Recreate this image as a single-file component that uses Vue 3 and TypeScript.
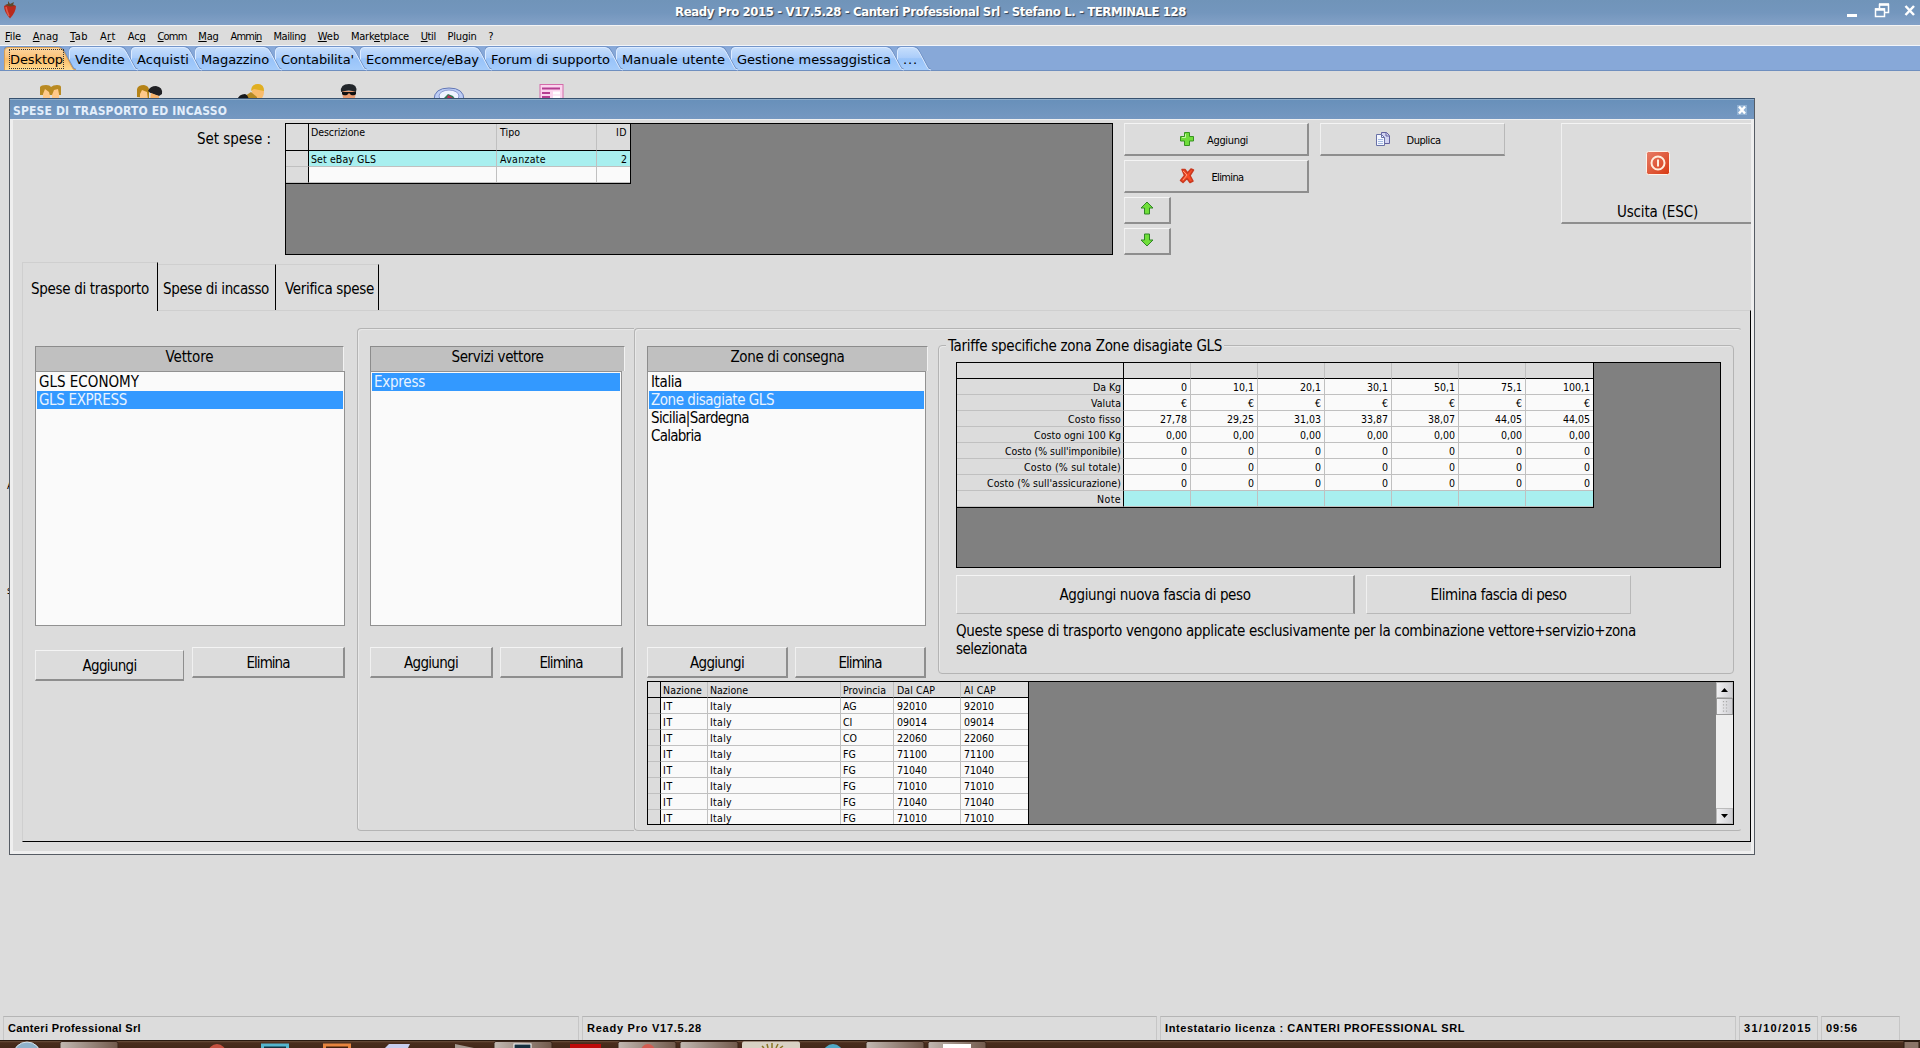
<script setup lang="ts">
interface FitText { label: string; width: number }
interface MenuItem { pre: string; key: string; post: string; width: number }

// Spreads or tightens the letters of a label so that it takes the given width.
const vFit = {
  mounted(el: HTMLElement, binding: { value: number }) {
    const length = (el.textContent ?? '').length
    if (!length || !binding.value) return
    const natural = el.getBoundingClientRect().width
    el.style.letterSpacing = `${((binding.value - natural) / length).toFixed(3)}px`
  },
}

const menu: MenuItem[] = [
  { pre: '', key: 'F', post: 'ile', width: 16 },
  { pre: '', key: 'A', post: 'nag', width: 25.500 },
  { pre: '', key: 'T', post: 'ab', width: 18 },
  { pre: 'A', key: 'r', post: 't', width: 16 },
  { pre: 'Ac', key: 'q', post: '', width: 18 },
  { pre: '', key: 'C', post: 'omm', width: 29 },
  { pre: '', key: 'M', post: 'ag', width: 20.500 },
  { pre: 'Ammi', key: 'n', post: '', width: 31 },
  { pre: 'Mailin', key: 'g', post: '', width: 32.500 },
  { pre: '', key: 'W', post: 'eb', width: 21.500 },
  { pre: 'Mark', key: 'e', post: 'tplace', width: 58 },
  { pre: '', key: 'U', post: 'til', width: 15 },
  { pre: 'Plugin', key: '', post: '', width: 29 },
  { pre: '?', key: '', post: '', width: 5 },
]

const tabs: FitText[] = [
  { label: 'Desktop', width: 53 },
  { label: 'Vendite', width: 50 },
  { label: 'Acquisti', width: 52 },
  { label: 'Magazzino', width: 68 },
  { label: "Contabilita'", width: 73 },
  { label: 'Ecommerce/eBay', width: 113 },
  { label: 'Forum di supporto', width: 119 },
  { label: 'Manuale utente', width: 103 },
  { label: 'Gestione messaggistica', width: 154 },
  { label: '...', width: 15 },
]

const tabPath = (w: number): string =>
  `M0.5 24 V5 Q0.5 1.5 4 1.5 H${w + 1} Q${w + 5} 1.5 ${w + 7} 6 L${w + 15} 21 Q${w + 16} 24 ${w + 19} 24`

const carriers: FitText[] = [{ label: 'GLS ECONOMY', width: 100 }, { label: 'GLS EXPRESS', width: 88 }]
const zones: FitText[] = [
  { label: 'Italia', width: 31 },
  { label: 'Zone disagiate GLS', width: 123 },
  { label: 'Sicilia|Sardegna', width: 98 },
  { label: 'Calabria', width: 50 },
]

const rates: { label: string; width: number; values: string[] }[] = [
  { label: 'Da Kg', width: 28, values: ['0', '10,1', '20,1', '30,1', '50,1', '75,1', '100,1'] },
  { label: 'Valuta', width: 30, values: Array(7).fill('€') },
  { label: 'Costo fisso', width: 53, values: ['27,78', '29,25', '31,03', '33,87', '38,07', '44,05', '44,05'] },
  { label: 'Costo ogni 100 Kg', width: 87, values: Array(7).fill('0,00') },
  { label: "Costo (% sull'imponibile)", width: 116, values: Array(7).fill('0') },
  { label: 'Costo (% sul totale)', width: 97, values: Array(7).fill('0') },
  { label: "Costo (% sull'assicurazione)", width: 134, values: Array(7).fill('0') },
  { label: 'Note', width: 24, values: Array(7).fill('') },
]

const areas: [string, string][] = [
  ['AG', '92010'], ['CI', '09014'], ['CO', '22060'], ['FG', '71100'],
  ['FG', '71040'], ['FG', '71010'], ['FG', '71040'], ['FG', '71010'],
]
</script>

<template>
  <div class="screen">
    <header class="titlebar">
      <svg class="berry" width="16" height="20" viewBox="0 0 16 20">
        <path d="M2 6 Q8 2 14 6 Q14 12 8 18.500 Q2 12 2 6Z" fill="#b92a1c" />
        <path d="M4 7 Q5 12 7 16" stroke="#de5a4a" stroke-width="1.500" fill="none" />
        <path d="M3 5 L6 4 L6 1 L8 4 L12 2 L11 5 L13 6 L8 6.500 Z" fill="#5d4a2c" />
      </svg>
      <h1><span v-fit="511">Ready Pro 2015 - V17.5.28 - Canteri Professional Srl - Stefano L. - TERMINALE 128</span></h1>
      <div class="controls">
        <svg width="22" height="22" viewBox="0 0 22 22"><rect x="5" y="14" width="10" height="3" fill="#fff" /></svg>
        <svg width="22" height="22" viewBox="0 0 22 22">
          <path d="M8.500 8V4.500H17.500V12.500H14" fill="none" stroke="#fff" stroke-width="1.500" />
          <path d="M8 4.500H18" stroke="#fff" stroke-width="2.500" />
          <rect x="4.500" y="9" width="9" height="7.500" fill="none" stroke="#fff" stroke-width="1.500" />
          <path d="M4 9.500H14" stroke="#fff" stroke-width="2.500" />
        </svg>
        <svg width="22" height="22" viewBox="0 0 22 22"><path d="M5.500 6L14 15M14 6L5.500 15" stroke="#fff" stroke-width="2.500" /></svg>
      </div>
    </header>

    <nav class="menu">
      <span v-for="m in menu" :key="m.pre + m.key + m.post" class="menu-item" :style="{ width: m.width + 'px' }"><span v-fit="m.width">{{ m.pre }}<u>{{ m.key }}</u>{{ m.post }}</span></span>
    </nav>

    <nav class="tabs">
      <div v-for="(t, i) in tabs" :key="t.label" class="tab" :class="{ active: i === 0 }" :style="{ width: t.width + 12 + 'px', zIndex: 20 - i }">
        <svg class="tab-shape" :width="t.width + 20" height="25" :viewBox="`0 0 ${t.width + 20} 25`">
          <defs>
            <linearGradient :id="'tab' + i" x1="0" y1="0" x2="0" y2="1">
              <stop offset="0" :stop-color="i ? '#c6defc' : '#fbd5a0'" />
              <stop offset=".45" :stop-color="i ? '#abcdfa' : '#fbc37a'" />
              <stop offset=".5" :stop-color="i ? '#98c3f9' : '#fbbd68'" />
              <stop offset="1" :stop-color="i ? '#a5ccfb' : '#ffdc92'" />
            </linearGradient>
          </defs>
          <path :d="tabPath(t.width)" fill="none" stroke="#6d8fc4" stroke-width="2.500" />
          <path :d="tabPath(t.width)" :fill="`url(#tab${i})`" :stroke="i ? '#dcebff' : '#d8a055'" />
        </svg>
        <span v-fit="t.width" class="tab-text">{{ t.label }}</span>
      </div>
    </nav>

    <main class="desktop">
      <div class="shortcuts">
        <svg width="24" height="16" viewBox="0 0 24 16">
          <path d="M1 11V3Q2 1 7 1Q11 1 12 3Q14 1 18 1Q22 1 22 3V11Z" fill="#b98a22" />
          <path d="M4 16V10L6 5L10 8L11 12V16ZM13 16V11L15 6L19 5L20 10V16Z" fill="#ffc98a" />
        </svg>
        <svg width="28" height="16" viewBox="0 0 28 16">
          <path d="M1 13V5Q2 1 8 1Q13 2 13 6V14Z" fill="#b58317" /><path d="M4 16V10L6 6L11 8L12 16Z" fill="#ffc98a" />
          <path d="M12 7Q14 2 20 2Q27 3 26 10L23 12Q15 10 12 7Z" fill="#202024" /><path d="M14 16L15 9L23 12V16Z" fill="#f8b36c" />
        </svg>
        <svg width="30" height="16" viewBox="0 0 30 16">
          <ellipse cx="21" cy="8" rx="6" ry="8" fill="#f9bc6c" /><path d="M14 7Q14 0 21 0Q27 0 27 7L17 5Z" fill="#e0af22" />
          <path d="M8 12L14 8L20 13V16H7Z" fill="#b58a24" /><path d="M0 16Q2 10 8 10Q11 11 12 16Z" fill="#16181b" />
        </svg>
        <svg width="20" height="16" viewBox="0 0 20 16">
          <path d="M3 7H17L16 14Q15 16 10 16Q5 16 4 14Z" fill="#e99c72" />
          <path d="M2 8Q1 0 10 0Q19 0 17 8Q10 5 2 8Z" fill="#22262a" />
          <path d="M3 8H17V10Q16 12 12 11L10 9L8 11Q4 12 3 10Z" fill="#111" />
        </svg>
        <svg width="33" height="16" viewBox="0 0 33 16">
          <path d="M2 16Q2 4 17 4Q32 4 32 16Z" fill="#bdcdf5" stroke="#6377b5" /><ellipse cx="17" cy="12" rx="10" ry="6" fill="#eef3ff" stroke="#8a99cf" />
          <path d="M12 14L16 10L21 12L24 16H12Z" fill="#327b54" /><path d="M16 11L21 14H15Z" fill="#bb3157" />
        </svg>
        <svg width="27" height="16" viewBox="0 0 27 16">
          <rect x="2" y=".5" width="23" height="16" fill="#fbd5ee" stroke="#d46baa" />
          <path d="M4 4.500H22M4 9H12M4 13H12" stroke="#b53e91" stroke-width="2" /><path d="M15 9H22M15 13H22" stroke="#fff" stroke-width="3" />
        </svg>
      </div>
      <span class="under first">A</span>
      <span class="under second">s</span>

      <section class="window">
        <div class="window-title">
          <span v-fit="214">SPESE DI TRASPORTO ED INCASSO</span>
          <svg width="10" height="10" viewBox="0 0 10 10"><rect width="10" height="10" fill="#8fb0d3" /><path d="M2 1.500L8 8.500M8 1.500L2 8.500" stroke="#fff" stroke-width="2.400" /></svg>
        </div>
        <div class="client">
          <div class="top">
            <div class="set-label"><span v-fit="74">Set spese :</span></div>
            <div class="grid set-grid">
              <div class="table set-table">
                <div class="row head"><i class="stub" /><b class="c-desc"><span v-fit="54">Descrizione</span></b><b class="c-type"><span v-fit="20">Tipo</span></b><b class="c-id"><span v-fit="11">ID</span></b></div>
                <div class="row current"><i class="stub" /><b class="c-desc"><span v-fit="65">Set eBay GLS</span></b><b class="c-type"><span v-fit="46">Avanzate</span></b><b class="c-id">2</b></div>
                <div class="row"><i class="stub" /><b class="c-desc" /><b class="c-type" /><b class="c-id" /></div>
              </div>
            </div>
            <div class="actions">
              <button class="btn small">
                <svg width="16" height="16" viewBox="0 0 16 16"><path d="M5.500 1.500H10.500V5.500H14.500V10H10.500V14.500H5.500V10H1.500V5.500H5.500Z" fill="#6fdc3a" stroke="#379320" /><path d="M6.500 3V6.500H3" stroke="#c4f7a4" fill="none" /></svg>
                <span class="cap"><span v-fit="41">Aggiungi</span></span>
              </button>
              <button class="btn small">
                <svg width="16" height="16" viewBox="0 0 16 16"><path d="M3 1.500L6 1.500L8.500 5L12 1L14.500 2L11 7.500L14 13L11 14.500L8 10.500L4 14.500L1.500 12.500L5.500 7.500Z" fill="#f74c27" stroke="#c93a20" stroke-linejoin="round" stroke-width="1.500" /><path d="M4 3L8 7L4 12" stroke="#ff9a77" fill="none" /></svg>
                <span class="cap"><span v-fit="32">Elimina</span></span>
              </button>
              <button class="btn arrow up"><svg width="14" height="14" viewBox="0 0 14 14"><path d="M7 1L13 7H9.500V13H4.500V7H1Z" fill="#70df39" stroke="#308527" /></svg></button>
              <button class="btn arrow"><svg width="14" height="14" viewBox="0 0 14 14"><path d="M7 13L13 7H9.500V1H4.500V7H1Z" fill="#70df39" stroke="#308527" /></svg></button>
            </div>
            <button class="btn small duplicate">
              <svg width="16" height="16" viewBox="0 0 16 16"><path d="M6.500 1.500H11.500L14.500 4.500V12.500H6.500Z" fill="#d2d4f1" stroke="#62609f" /><path d="M11 1.500V5H14" fill="none" stroke="#62609f" /><path d="M1.500 3.500H6.500L9.500 6.500V14.500H1.500Z" fill="#f4f7ff" stroke="#6971a7" /><path d="M6.500 3.500V6.500H9.500" fill="none" stroke="#6971a7" /><path d="M3 8.500H8M3 10.500H8M3 12.500H8" stroke="#a4bae2" /></svg>
              <span class="cap"><span v-fit="34">Duplica</span></span>
            </button>
            <button class="btn exit">
              <svg width="24" height="24" viewBox="0 0 24 24"><defs><linearGradient id="exitFill" x1="0" y1="0" x2="1" y2="1"><stop stop-color="#e77e68" /><stop offset="1" stop-color="#d83911" /></linearGradient></defs><rect x=".5" y=".5" width="23" height="23" rx="2" fill="url(#exitFill)" stroke="#fff2e8" /><circle cx="12" cy="12" r="6.500" fill="none" stroke="#ffeedd" stroke-width="2" /><path d="M12 8.500V15.500" stroke="#ffeedd" stroke-width="2" /></svg>
              <span v-fit="81">Uscita (ESC)</span>
            </button>
          </div>

          <div class="page-tabs">
            <div class="ptab on"><span v-fit="118">Spese di trasporto</span></div>
            <div class="ptab mid"><span v-fit="106">Spese di incasso</span></div>
            <div class="ptab last"><span v-fit="89">Verifica spese</span></div>
          </div>

          <div class="page">
            <div class="carrier">
              <div class="caption"><span v-fit="48">Vettore</span></div>
              <div class="list"><div v-for="(c, i) in carriers" :key="c.label" class="item" :class="{ selected: i === 1 }"><span v-fit="c.width">{{ c.label }}</span></div></div>
              <div class="buttons"><button class="btn lowered"><span v-fit="54">Aggiungi</span></button><button class="btn wide"><span v-fit="43">Elimina</span></button></div>
            </div>

            <div class="group services">
              <div class="caption"><span v-fit="92">Servizi vettore</span></div>
              <div class="list"><div class="item selected"><span v-fit="51">Express</span></div></div>
              <div class="buttons"><button class="btn"><span v-fit="54">Aggiungi</span></button><button class="btn"><span v-fit="43">Elimina</span></button></div>
            </div>

            <div class="group zones">
              <div class="zones-top">
                <div class="zone-list">
                  <div class="caption"><span v-fit="114">Zone di consegna</span></div>
                  <div class="list"><div v-for="(z, i) in zones" :key="z.label" class="item" :class="{ selected: i === 1 }"><span v-fit="z.width">{{ z.label }}</span></div></div>
                  <div class="buttons"><button class="btn add"><span v-fit="54">Aggiungi</span></button><button class="btn del"><span v-fit="43">Elimina</span></button></div>
                </div>
                <div class="group rates">
                  <div class="legend"><span v-fit="278">Tariffe specifiche zona Zone disagiate GLS</span></div>
                  <div class="grid rate-grid">
                    <div class="table rate-table">
                      <div class="row head"><i class="rlabel" /><b v-for="n in 7" :key="n" class="rval" /></div>
                      <div v-for="(r, i) in rates" :key="r.label" class="row" :class="{ current: i === 7 }">
                        <i class="rlabel"><span v-fit="r.width">{{ r.label }}</span></i><b v-for="(v, j) in r.values" :key="j" class="rval">{{ v }}</b>
                      </div>
                    </div>
                  </div>
                  <div class="rate-buttons"><button class="btn flat-bottom"><span v-fit="191">Aggiungi nuova fascia di peso</span></button><button class="btn soft"><span v-fit="136">Elimina fascia di peso</span></button></div>
                  <p class="note"><span v-fit="680">Queste spese di trasporto vengono applicate esclusivamente per la combinazione vettore+servizio+zona</span><br><span v-fit="71">selezionata</span></p>
                </div>
              </div>

              <div class="grid area-grid">
                <div class="table area-table">
                  <div class="row head"><i class="stub" /><b class="a1"><span v-fit="39">Nazione</span></b><b class="a2"><span v-fit="38">Nazione</span></b><b class="a3"><span v-fit="43">Provincia</span></b><b class="a4"><span v-fit="38">Dal CAP</span></b><b class="a5"><span v-fit="32">Al CAP</span></b></div>
                  <div v-for="(a, i) in areas" :key="i" class="row"><i class="stub" /><b class="a1"><span v-fit="10">IT</span></b><b class="a2"><span v-fit="22">Italy</span></b><b class="a3">{{ a[0] }}</b><b class="a4">{{ a[1] }}</b><b class="a5">{{ a[1] }}</b></div>
                </div>
                <div class="scroll">
                  <div class="sbtn"><svg width="7" height="4" viewBox="0 0 7 4"><path d="M0 4L3.500 0L7 4Z" /></svg></div>
                  <div class="thumb"><svg width="6" height="12" viewBox="0 0 6 12"><path d="M1.500 0V12M4.500 0V12" stroke="#aaa" stroke-width="1.200" stroke-dasharray="1.200 2" /></svg></div>
                  <div class="track" />
                  <div class="sbtn"><svg width="7" height="4" viewBox="0 0 7 4"><path d="M0 0L3.500 4L7 0Z" /></svg></div>
                </div>
              </div>
            </div>
          </div>
        </div>
      </section>
    </main>

    <footer class="status">
      <div class="s1"><span v-fit="133">Canteri Professional Srl</span></div>
      <div class="s2"><span v-fit="115">Ready Pro V17.5.28</span></div>
      <div class="s3"><span v-fit="300">Intestatario licenza : CANTERI PROFESSIONAL SRL</span></div>
      <div class="s4"><span v-fit="68">31/10/2015</span></div>
      <div class="s5"><span v-fit="32">09:56</span></div>
    </footer>
    <div class="taskbar">
      <svg width="1920" height="8" viewBox="0 0 1920 8">
        <defs>
          <linearGradient id="brown" x1="0" y1="0" x2="0" y2="1"><stop stop-color="#80644f" /><stop offset=".35" stop-color="#4a2d1d" /><stop offset="1" stop-color="#432819" /></linearGradient>
          <linearGradient id="task" x1="0" y1="0" x2="1" y2="0"><stop stop-color="#c2b9b2" /><stop offset="1" stop-color="#71594b" /></linearGradient>
        </defs>
        <rect width="1920" height="8" fill="url(#brown)" /><rect width="1920" height="1" fill="#2a1a10" />
        <circle cx="27" cy="16" r="14" fill="#8fb2ca" stroke="#d8e5ed" />
        <g fill="url(#task)" stroke="#3a261b"><rect x="60" y="1.500" width="58" height="9" rx="2" /><rect x="494" y="1.500" width="58" height="9" rx="2" /><rect x="618" y="1.500" width="58" height="9" rx="2" /><rect x="680" y="1.500" width="58" height="9" rx="2" /><rect x="866" y="1.500" width="58" height="9" rx="2" /><rect x="928" y="1.500" width="58" height="9" rx="2" /></g>
        <rect x="742" y="1.500" width="58" height="9" rx="2" fill="#d9d2c4" />
        <circle cx="217" cy="13" r="9" fill="#c55140" /><circle cx="648" cy="11" r="7" fill="#d35b50" /><circle cx="833" cy="14" r="10" fill="#4fa9c6" />
        <path d="M262.500 8V5H287.500V8" fill="#123542" stroke="#55b6cf" stroke-width="3" /><path d="M324.500 8V5H349.500V8" fill="#43210e" stroke="#e8853f" stroke-width="3" />
        <path d="M385 8L389 4H410L408 8Z" fill="#c8cef0" /><path d="M455 8V4L474 8Z" fill="#a69a91" />
        <rect x="514" y="4" width="17" height="6" fill="#17303f" stroke="#fff" /><rect x="570" y="4" width="31" height="4" fill="#bd0a0a" />
        <path d="M764 8L762 6M768 8L767 4M772 8V3M776 8L778 4M780 8L783 6" stroke="#8b7424" stroke-width="1.500" /><rect x="943" y="4" width="28" height="4" fill="#fff" />
        <rect x="1904" y="1.500" width="15" height="8" fill="#8a7467" stroke="#2a1a10" />
      </svg>
    </div>
  </div>
</template>

<style>
body { margin: 0; overflow: hidden; background: #dcdcdc; }
</style>

<style scoped>
* { box-sizing: border-box; }
.screen { width: 1920px; height: 1048px; overflow: hidden; display: flex; flex-direction: column; background: #dcdcdc; color: #000; font: 11px/14px "DejaVu Sans Condensed", "DejaVu Sans", sans-serif; font-stretch: condensed; }
span { display: inline-block; white-space: nowrap; }
b, i { font-weight: normal; font-style: normal; }
svg { display: block; flex: none; }

.titlebar { height: 25px; flex: none; display: flex; align-items: flex-start; background: linear-gradient(#7094b9, #7396bd 50%, #83a1c7); }
.berry { margin: 0 0 0 2px; width: 16px; }
.titlebar h1 { margin: 0 0 0 657px; width: 1167px; flex: none; font-size: 13px; line-height: 24px; color: #fff; text-shadow: 1px 1px 1px #333f50; }
.controls { display: flex; gap: 7px; }

.menu { height: 21px; flex: none; display: flex; gap: 11.8px; padding-left: 5px; line-height: 21px; border-top: 1px solid #f4f4f4; border-bottom: 1px solid #f2f5fa; }
.menu-item { flex: none; }

.tabs { height: 25px; flex: none; display: flex; padding-left: 4px; background: #87a8d8; border-bottom: 1px solid #6f8fbf; }
.tab { position: relative; flex: none; height: 25px; padding-left: 6px; }
.tab-shape { position: absolute; left: 0; top: 0; }
.tab-text { position: relative; font: 13px/27px "DejaVu Sans", sans-serif; font-stretch: normal; }
.tab.active .tab-text { outline: 1px dotted #333; height: 18px; line-height: 20px; margin-top: 4px; }

.desktop { position: relative; flex: none; height: 970px; }
.shortcuts { display: flex; padding: 13px 0 0 39px; gap: 72.8px; }
.under { position: absolute; left: 7px; }
.under.first { top: 408px; }
.under.second { top: 513px; }

.window { position: absolute; left: 9px; top: 27px; width: 1746px; height: 757px; background: #dcdcdc; border: 1px solid #565c64; border-top-color: #36516f; }
.window-title { height: 20px; display: flex; justify-content: space-between; align-items: center; padding: 1px 7px 0 3px; background: linear-gradient(#6890ba, #7598c1); color: #e3eefb; font-weight: bold; font-size: 12px; border-top: 1px solid #8eacc9; }
.window-title span { padding-top: 2px; }
.client { height: 735px; border: 3px solid #efefef; border-top-width: 1px; display: flex; flex-direction: column; }
.top { height: 142px; flex: none; display: flex; align-items: flex-start; padding-top: 3px; font-size: 11px; }
.set-label { width: 272px; padding: 7px 14px 0 0; text-align: right; font-size: 15px; line-height: 18px; flex: none; }

.grid { background: #808080; border: 1px solid #000; overflow: hidden; flex: none; display: flex; align-items: flex-start; }
.table { background: #fafafa; flex: none; border-right: 1px solid #000; border-bottom: 1px solid #000; font-size: 10.5px; line-height: 17px; }
.row { display: flex; height: 16px; }
.row > * { flex: none; border-right: 1px solid #c0c0c0; border-bottom: 1px solid #c0c0c0; padding: 0 2px; overflow: hidden; height: 100%; white-space: nowrap; }
.row > :last-child { border-right: 0; }
.row > i { background: #dcdcdc; border-right-color: #000; }
.row.head > * { background: #dcdcdc; border-bottom-color: #000; }
.row.current > b { background: #a8efef; }
.set-grid { width: 828px; height: 132px; }
.set-table .head { height: 27px; line-height: 17px; }
.set-table .stub { width: 23px; }
.c-desc { width: 188px; }
.c-type { width: 100px; padding-left: 3px !important; }
.c-id { width: 33px; text-align: right; padding-right: 3px !important; }

.btn { display: flex; align-items: center; justify-content: center; flex: none; margin: 0; padding: 0; background: #dcdcdc; border: 1px solid; border-width: 1px 2px 2px 1px; border-color: #f4f4f4 #8e8e8e #8e8e8e #f0f0f0; color: #000; font: inherit; }
.btn.small { width: 185px; height: 33px; justify-content: flex-start; padding: 3px 0 0 54px; gap: 0; }
.btn.small svg { margin-top: -4px; }
.duplicate { border-right: 1px solid #b8b8b8; }
.cap { width: 65px; text-align: center; }
.btn.arrow { width: 47px; height: 27px; padding-bottom: 2px; }
.btn.arrow.up { padding-bottom: 4px; }
.actions { display: flex; flex-direction: column; margin: 0 11px; gap: 4px; }
.exit { width: 190px; height: 101px; margin-left: 56px; flex-direction: column; border-right-width: 0; font-size: 15px; padding: 26px 0 0 2px; gap: 28px; }
.exit span { line-height: 18px; }

.page-tabs { height: 48px; flex: none; display: flex; align-items: flex-end; padding-left: 9px; font-size: 15px; line-height: 18px; }
.ptab { border-top: 1px solid #cfcfcf; border-right: 1px solid #000; height: 46px; flex: none; padding-top: 15px; }
.ptab.on { width: 136px; height: 49px; border-left: 1px solid #cfcfcf; padding: 17px 0 0 8px; margin-bottom: -1px; background: #dcdcdc; position: relative; }
.ptab.mid { width: 118px; padding-left: 5px; }
.ptab.last { width: 103px; padding-left: 9px; }
.page { margin-left: 9px; height: 532px; flex: none; border: 1px solid #cfcfcf; border-right: 1px solid #000; border-bottom: 1px solid #000; display: flex; font-size: 15px; line-height: 18px; }
.caption { height: 25px; flex: none; background: #c0c0c0; border: 1px solid #8c8c8c; border-right-color: #f2f2f2; border-bottom: 0; text-align: center; line-height: 21px; }
.list { height: 255px; flex: none; background: #fafafa; border: 1px solid #919191; padding: 1px; }
.item { height: 18px; padding-left: 2px; }
.item.selected { background: #3399ff; color: #e8f3ff; }
.carrier { width: 310px; margin: 35px 12px 0; flex: none; }
.carrier .caption { width: 309px; }
.buttons { display: flex; gap: 7px; margin-top: 21px; align-items: flex-start; }
.buttons .btn { height: 31px; width: 123px; padding-top: 1px; }
.carrier .buttons { gap: 8px; }
.carrier .lowered { width: 149px; margin-top: 3px; border-right-width: 1px; }
.carrier .wide { width: 153px; }
.group { border: 1px solid #b4b4b4; border-radius: 4px; box-shadow: inset 1px 1px #e8e8e8; }
.services { width: 277px; height: 503px; margin-top: 17px; padding: 17px 0 0 12px; flex: none; border-right: 0; border-radius: 4px 0 0 4px; }
.services .caption { width: 255px; }
.services .list { width: 252px; }
.zones { width: 1108px; height: 503px; margin-top: 17px; padding-left: 12px; flex: none; border-right-color: transparent; }
.zones-top { display: flex; height: 352px; }
.zone-list { width: 281px; padding-top: 17px; flex: none; }
.zone-list .list { width: 279px; }
.zone-list .add { width: 141px; }
.zone-list .del { width: 131px; }
.rates { width: 796px; height: 329px; margin: 16px 0 0 10px; padding-left: 17px; flex: none; }
.legend { height: 16px; margin-left: -10px; display: flex; align-items: flex-start; }
.legend span { margin-top: -9px; background: #dcdcdc; padding: 0 2px; }
.rate-grid { width: 765px; height: 206px; }
.rate-table .head { height: 16px; }
.rlabel { width: 167px; text-align: right; }
.rval { width: 67px; text-align: right; padding-right: 3px !important; }
.rate-buttons { display: flex; gap: 11px; margin-top: 7px; }
.rate-buttons .btn { height: 39px; border-bottom: 1px solid #b8b8b8; }
.flat-bottom { width: 399px; }
.soft { width: 265px; border-right: 1px solid #b8b8b8; }
.note { margin: 8px 0 0; }
.note span { vertical-align: top; }
.area-grid { width: 1087px; height: 144px; justify-content: space-between; }
.area-table .stub { width: 13px; }
.a1 { width: 47px; }
.a2 { width: 133px; }
.a3 { width: 53px; }
.a4, .a5 { width: 67px; padding-left: 3px !important; }
.scroll { width: 17px; height: 142px; background: #eee; display: flex; flex-direction: column; }
.sbtn, .thumb { height: 16px; display: flex; align-items: center; justify-content: center; background: linear-gradient(90deg, #f0f0f2, #cfcfd3); border: 1px solid #bbb; }
.thumb { height: 17px; border-color: #999; }
.track { flex: 1; }

.status { position: relative; height: 24px; margin-top: -25px; flex: none; display: flex; padding-left: 3px; gap: 3px; background: #dcdcdc; font: bold 11px/23px "Liberation Sans", Arial, sans-serif; }
.status div { border: 1px solid #c6c6c6; border-top-color: #b5b5b5; border-bottom: 0; padding-left: 4px; flex: none; }
.s1 { width: 576px; }
.s2 { width: 575px; }
.s3 { width: 576px; }
.s4 { width: 79px; }
.s5 { width: 79px; }
.taskbar { position: relative; height: 8px; flex: none; }
</style>
